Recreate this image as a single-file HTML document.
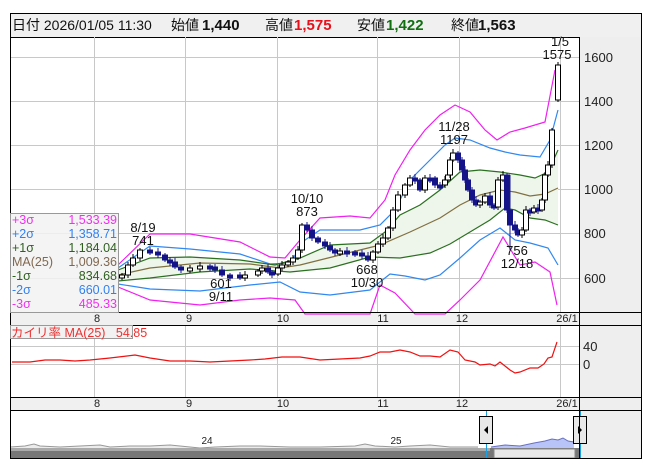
<!DOCTYPE html>
<html><head><meta charset="utf-8"><style>
html,body{margin:0;padding:0;background:#fff;width:653px;height:470px;overflow:hidden}
svg{display:block;font-family:"Liberation Sans","Noto Sans CJK JP",sans-serif}
</style></head><body>
<svg id="s" width="653" height="470" xmlns="http://www.w3.org/2000/svg">
<rect x="0" y="0" width="653" height="470" fill="#fff"/>
<rect x="10.5" y="13.5" width="631" height="24" fill="#f0f0f0" stroke="#000"/>
<g font-size="14" fill="#111">
<text x="12" y="30">日付 2026/01/05 11:30</text>
<text x="171" y="30">始値</text><text x="202" y="30" font-weight="bold" font-size="15">1,440</text>
<text x="265" y="30">高値</text><text x="294" y="30" font-weight="bold" font-size="15" fill="#e8101a">1,575</text>
<text x="357" y="30">安値</text><text x="386" y="30" font-weight="bold" font-size="15" fill="#107010">1,422</text>
<text x="451" y="30">終値</text><text x="478" y="30" font-weight="bold" font-size="15">1,563</text>
</g>
<rect x="580" y="37" width="61" height="421" fill="#eeeeee"/>
<rect x="10" y="312" width="570" height="13" fill="#f0f0f0"/>
<rect x="10" y="397" width="570" height="13" fill="#f0f0f0"/>
<g id="grid" stroke="#c8c8c8" stroke-width="1"></g>
<g id="bands"></g>
<g id="candles"></g>
<g id="osc"></g>
<g id="nav"></g>
<g stroke="#000" fill="none">
<rect x="10.5" y="13.5" width="631" height="445"/>
<line x1="579.5" y1="37" x2="579.5" y2="458"/>
<line x1="10" y1="312.5" x2="641" y2="312.5"/>
<line x1="10" y1="325.5" x2="641" y2="325.5"/>
<line x1="10" y1="397.5" x2="641" y2="397.5"/>
<line x1="10" y1="410.5" x2="641" y2="410.5"/>
</g>
<g font-size="11" fill="#222" text-anchor="middle">
<text x="97" y="322">8</text><text x="189" y="322">9</text><text x="283" y="322">10</text><text x="383" y="322">11</text><text x="462" y="322">12</text><text x="567" y="322">26/1</text>
<text x="97" y="407">8</text><text x="189" y="407">9</text><text x="283" y="407">10</text><text x="383" y="407">11</text><text x="462" y="407">12</text><text x="567" y="407">26/1</text>
</g>
<g font-size="13" fill="#222">
<text x="584" y="62">1600</text><text x="584" y="106">1400</text><text x="584" y="150">1200</text><text x="584" y="194">1000</text><text x="584" y="238">800</text><text x="584" y="283">600</text>
<text x="583" y="351">40</text><text x="583" y="369">0</text>
</g>
<g font-size="13" fill="#111" text-anchor="middle">
<text x="560" y="46">1/5</text><text x="557" y="59">1575</text>
<text x="454" y="131">11/28</text><text x="454" y="144">1197</text>
<text x="307" y="203">10/10</text><text x="307" y="216">873</text>
<text x="143" y="232">8/19</text><text x="143" y="245">741</text>
<text x="221" y="288">601</text><text x="221" y="301">9/11</text>
<text x="367" y="274">668</text><text x="367" y="287">10/30</text>
<text x="517" y="255">756</text><text x="517" y="268">12/18</text>
</g>
<rect x="10.5" y="213.5" width="108" height="99" fill="#f2f2f2" fill-opacity="0.85" stroke="#999"/>
<g font-size="12.5">
<text x="12" y="224" fill="#f030f0">+3σ</text><text x="117" y="224" fill="#f030f0" text-anchor="end">1,533.39</text>
<text x="12" y="238" fill="#3080f0">+2σ</text><text x="117" y="238" fill="#3080f0" text-anchor="end">1,358.71</text>
<text x="12" y="252" fill="#306020">+1σ</text><text x="117" y="252" fill="#306020" text-anchor="end">1,184.04</text>
<text x="12" y="266" fill="#806850">MA(25)</text><text x="117" y="266" fill="#806850" text-anchor="end">1,009.36</text>
<text x="12" y="280" fill="#306020">-1σ</text><text x="117" y="280" fill="#306020" text-anchor="end">834.68</text>
<text x="12" y="294" fill="#3080f0">-2σ</text><text x="117" y="294" fill="#3080f0" text-anchor="end">660.01</text>
<text x="12" y="308" fill="#f030f0">-3σ</text><text x="117" y="308" fill="#f030f0" text-anchor="end">485.33</text>
</g>
<rect x="10.5" y="325.5" width="122" height="13" fill="#f2f2f2" stroke="#999"/>
<text x="11" y="337" font-size="12.5" fill="#f03030">カイリ率 MA(25)&#160;&#160;&#160;54.85</text>
</svg>
<script>
var NS="http://www.w3.org/2000/svg";
function el(p,t,a){var e=document.createElementNS(NS,t);for(var k in a)e.setAttribute(k,a[k]);p.appendChild(e);return e;}
var g=document.getElementById('grid');
[94,185,277,377,459,560].forEach(function(x){el(g,'line',{x1:x+.5,y1:37,x2:x+.5,y2:312});el(g,'line',{x1:x+.5,y1:325,x2:x+.5,y2:397});});
[57,101,145,189,233,278].forEach(function(y){el(g,'line',{x1:10,y1:y+.5,x2:580,y2:y+.5});});
[346,364].forEach(function(y){el(g,'line',{x1:10,y1:y+.5,x2:580,y2:y+.5});});
function pts(a){return a.map(function(p){return p.join(',')}).join(' ');}
var p3=[[118,265],[150,234],[190,234],[240,242],[270,257],[285,258],[300,240],[320,218],[350,216],[370,218],[385,200],[395,175],[410,150],[425,130],[440,115],[455,105],[470,112],[485,130],[497,140],[510,132],[525,128],[545,122],[555,70]];
var p2=[[118,268],[150,246],[190,249],[240,254],[270,264],[290,263],[305,240],[320,230],[360,230],[380,225],[395,210],[410,180],[430,160],[445,145],[455,138],[470,140],[490,148],[505,152],[520,155],[540,157],[550,140],[558,110]];
var p1=[[118,270],[150,258],[190,257],[240,260],[275,265],[300,258],[330,245],[370,243],[385,232],[400,215],[420,205],[440,190],[460,172],[480,170],[500,172],[520,175],[535,178],[548,172],[558,150]];
var ma=[[118,275],[150,268],[200,263],[250,264],[280,268],[300,265],[340,255],[380,245],[410,232],[440,218],[460,205],[480,195],[500,190],[515,192],[530,196],[545,194],[558,188]];
var m1=[[118,281],[150,278],[200,272],[250,269],[290,272],[330,268],[370,257],[400,258],[430,253],[450,244],[470,232],[490,220],[505,208],[515,210],[530,218],[545,220],[558,225]];
var m2=[[118,284],[150,289],[200,291],[250,285],[280,282],[300,292],[330,295],[370,290],[390,274],[405,276],[425,280],[440,275],[460,258],[480,240],[500,228],[515,240],[530,243],[548,248],[558,265]];
var m3=[[118,287],[150,300],[200,305],[240,300],[270,298],[295,300],[305,314],[370,314],[380,285],[395,293],[415,314],[445,314],[460,300],[480,280],[503,237],[520,265],[535,262],[550,272],[557,305]];
var b=document.getElementById('bands');
el(b,'polygon',{points:pts(p1.concat(m1.slice().reverse())),fill:'#eef5ea'});
[[p3,'#f020f0'],[p2,'#3088f0'],[p1,'#2a7020'],[ma,'#807040'],[m1,'#2a7020'],[m2,'#3088f0'],[m3,'#f020f0']].forEach(function(q){el(b,'polyline',{points:pts(q[0]),fill:'none',stroke:q[1],'stroke-width':1.2});});
var c=[[122,275],[128,265],[133,258],[140,250],[150,252],[158,255],[165,260],[170,262],[175,267],[181,270],[190,268],[200,266],[210,267],[215,270],[222,275],[230,275],[240,276],[245,275],[258,271],[262,268],[268,272],[272,274],[278,268],[282,265],[288,262],[293,258],[298,250],[302,225],[307,230],[312,238],[318,242],[325,246],[330,250],[335,253],[340,251],[347,252],[355,253],[362,256],[368,260],[373,252],[378,244],[383,238],[388,228],[393,210],[398,195],[405,185],[410,178],[415,180],[420,190],[425,178],[430,178],[435,185],[440,185],[445,180],[448,175],[450,160],[453,153],[458,160],[462,170],[465,180],[468,190],[472,200],[476,205],[480,202],[485,196],[490,205],[494,207],[498,180],[503,175],[507,210],[510,225],[515,230],[518,235],[522,230],[526,210],[530,212],[534,208],[538,210],[542,200],[545,175],[548,165],[552,130],[558,65]];
var cg=document.getElementById('candles');var prev=278;
c.forEach(function(d,i){var o=(i==c.length-1)?100:prev,cl=d[1];var top=Math.min(o,cl),bot=Math.max(o,cl);if(bot-top<3){bot=top+3;}
var up=cl<o;var hi=top-2-(i%3),lo=bot+2+(i%2);if(i==c.length-1){hi=62;lo=102;}if(i==70){hi=175;lo=250;}
el(cg,'line',{x1:d[0],y1:hi,x2:d[0],y2:lo,stroke:up?'#000':'#1a1a8c','stroke-width':1});
el(cg,'rect',{x:d[0]-2.5,y:top,width:5,height:bot-top,fill:up?'#fff':'#141488',stroke:up?'#000':'#141488','stroke-width':1});prev=cl;});
var os=[[12,362],[30,362],[45,360],[60,360],[75,361],[90,360],[110,358],[135,355],[150,358],[170,361],[190,361],[210,362],[230,361],[250,360],[265,359],[282,357],[300,357],[320,360],[340,359],[360,358],[370,356],[380,352],[390,352],[400,350],[410,352],[420,356],[430,356],[440,357],[450,350],[458,352],[465,360],[475,362],[480,365],[490,364],[495,366],[500,362],[510,370],[515,373],[520,372],[530,368],[538,368],[544,364],[548,358],[552,357],[557,342]];
el(document.getElementById('osc'),'polyline',{points:pts(os),fill:'none',stroke:'#f01010','stroke-width':1.2});
var n=document.getElementById('nav');
var nl=[[10,447],[25,446],[34,444],[40,446],[60,447],[80,446],[100,445],[110,447],[130,446],[150,446],[170,445],[190,447],[200,448],[215,447],[240,446],[260,446],[290,447],[320,447],[355,446],[365,444],[375,446],[395,447],[410,446],[430,445],[450,447],[478,447]];
el(n,'polygon',{points:pts(nl.concat([[478,448],[10,448]])),fill:'#ececec'});
el(n,'polyline',{points:pts(nl),fill:'none',stroke:'#999','stroke-width':1});
var nb=[[491,447],[505,445],[520,446],[534,443],[545,441],[552,439],[558,440],[563,438],[568,441],[574,442]];
el(n,'polygon',{points:pts(nb.concat([[574,448],[491,448]])),fill:'#b8c4f8'});
el(n,'polyline',{points:pts(nb),fill:'none',stroke:'#6870c0','stroke-width':1});
el(n,'rect',{x:10,y:448,width:570,height:10,fill:'#777'});
el(n,'rect',{x:10,y:448,width:480,height:3,fill:'#aaa'});
el(n,'rect',{x:494,y:449,width:81,height:9,fill:'#e8e8e8',stroke:'#888'});
el(n,'line',{x1:486.5,y1:411,x2:486.5,y2:458,stroke:'#1aa0e0'});
el(n,'line',{x1:580.5,y1:411,x2:580.5,y2:458,stroke:'#1aa0e0'});
el(n,'rect',{x:479.5,y:416.5,width:13,height:27,fill:'#e8e8e8',stroke:'#000'});
el(n,'rect',{x:573.5,y:416.5,width:13,height:27,fill:'#e8e8e8',stroke:'#000'});
el(n,'polygon',{points:'484,430 488,426 488,434',fill:'#000'});
el(n,'polygon',{points:'582,430 578,426 578,434',fill:'#000'});
var t=el(n,'text',{x:207,y:444,'font-size':10,fill:'#222','text-anchor':'middle'});t.textContent='24';
t=el(n,'text',{x:396,y:444,'font-size':10,fill:'#222','text-anchor':'middle'});t.textContent='25';
</script>
</body></html>
